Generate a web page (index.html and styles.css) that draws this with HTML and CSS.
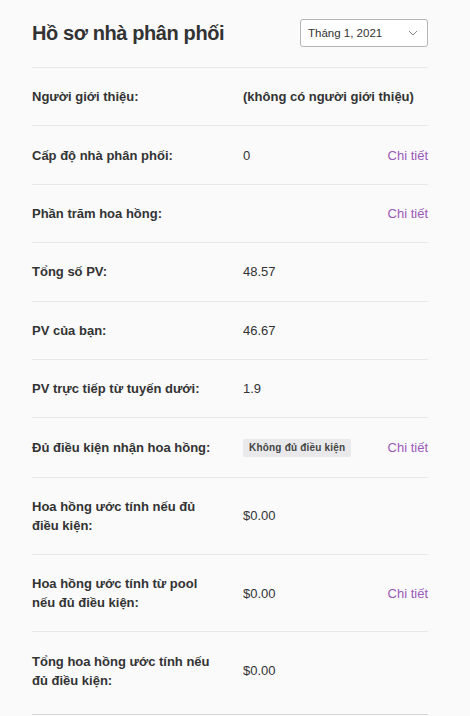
FILE: index.html
```html
<!DOCTYPE html>
<html lang="vi">

<head>
    <meta charset="UTF-8">
    <meta name="viewport" content="width=device-width, initial-scale=1.0">
    <title>Hồ sơ nhà phân phối</title>
    <link rel="stylesheet" href="styles.css">
</head>

<body>
    <div class="profile">
        <div class="profile-header">
            <h1>Hồ sơ nhà phân phối</h1>
            <div class="month-select">
                <span>Tháng 1, 2021</span>
                <svg width="10" height="6" viewBox="0 0 10 6"><path d="M1 1l4 4 4-4" fill="none" stroke="#888" stroke-width="1"/></svg>
            </div>
        </div>

        <div class="row">
            <div class="label">Người giới thiệu:</div>
            <div class="value strong">(không có người giới thiệu)</div>
        </div>
        <div class="row">
            <div class="label">Cấp độ nhà phân phối:</div>
            <div class="value">0</div>
            <a class="detail" href="#">Chi tiết</a>
        </div>
        <div class="row">
            <div class="label">Phần trăm hoa hồng:</div>
            <div class="value"></div>
            <a class="detail" href="#">Chi tiết</a>
        </div>
        <div class="row">
            <div class="label">Tổng số PV:</div>
            <div class="value">48.57</div>
        </div>
        <div class="row">
            <div class="label">PV của bạn:</div>
            <div class="value">46.67</div>
        </div>
        <div class="row">
            <div class="label">PV trực tiếp từ tuyến dưới:</div>
            <div class="value">1.9</div>
        </div>
        <div class="row">
            <div class="label">Đủ điều kiện nhận hoa hồng:</div>
            <div class="value"><span class="badge">Không đủ điều kiện</span></div>
            <a class="detail" href="#">Chi tiết</a>
        </div>
        <div class="row">
            <div class="label">Hoa hồng ước tính nếu đủ điều kiện:</div>
            <div class="value">$0.00</div>
        </div>
        <div class="row">
            <div class="label">Hoa hồng ước tính từ pool nếu đủ điều kiện:</div>
            <div class="value">$0.00</div>
            <a class="detail" href="#">Chi tiết</a>
        </div>
        <div class="row last">
            <div class="label">Tổng hoa hồng ước tính nếu đủ điều kiện:</div>
            <div class="value">$0.00</div>
        </div>

        <div class="panel"></div>
    </div>
</body>

</html>
```

FILE: styles.css
```css
body {
    margin: 0;
    background-color: #fafafb;
    font-family: "Liberation Sans", Arial, sans-serif;
    color: #333;
}

.profile {
    width: 396px;
    margin-left: 32px;
}

.profile-header {
    display: flex;
    justify-content: space-between;
    align-items: center;
    padding: 19px 0 20px;
    border-bottom: 1px solid #e8e8e8;
}

.profile-header h1 {
    margin: 0;
    font-size: 20px;
    font-weight: bold;
    letter-spacing: -0.4px;
    color: #333;
}

.month-select {
    box-sizing: border-box;
    width: 128px;
    height: 28px;
    display: flex;
    align-items: center;
    justify-content: space-between;
    padding: 0 9px 0 7px;
    border: 1px solid #b5b5b5;
    border-radius: 3px;
    background: #fff;
    font-size: 11.5px;
    color: #333;
}

.row {
    display: flex;
    align-items: center;
    padding: 19.2px 0;
    border-bottom: 1px solid #e8e8e8;
    font-size: 13px;
    line-height: 19px;
}

.row.last {
    padding-bottom: 24px;
    border-bottom: none;
}

.label {
    width: 182px;
    margin-right: 29px;
    font-weight: bold;
}

.value {
    flex: 1;
}

.value.strong {
    font-weight: bold;
}

.detail {
    color: #9b59b6;
    text-decoration: none;
}

.badge {
    display: inline-block;
    padding: 0 6px;
    background-color: #e9e9eb;
    border-radius: 2px;
    font-size: 10px;
    line-height: 18px;
    font-weight: bold;
    color: #444;
    letter-spacing: 0.2px;
}

.panel {
    height: 0;
    border: 1px solid #d5d5da;
    border-bottom: none;
    border-radius: 3px 3px 0 0;
    background: #f6f6f8;
}
```
